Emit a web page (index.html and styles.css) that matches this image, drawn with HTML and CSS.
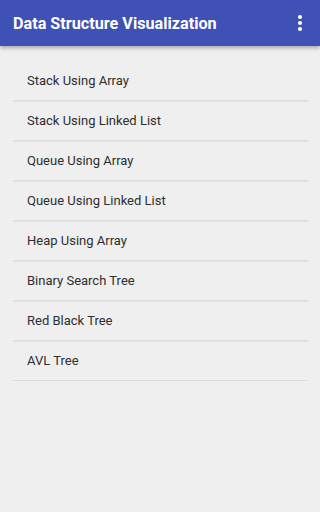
FILE: index.html
```html
<!DOCTYPE html>
<html>
<head>
<meta charset="utf-8">
<link rel="stylesheet" href="styles.css">
</head>
<body>
<header class="appbar">
  <div class="title">Data Structure Visualization</div>
  <svg class="menu" width="6" height="18" viewBox="0 0 6 18"><circle cx="3" cy="3" r="2.1" fill="#fff"/><circle cx="3" cy="9" r="2.1" fill="#fff"/><circle cx="3" cy="15" r="2.1" fill="#fff"/></svg>
</header>
<ul class="list">
  <li class="item">Stack Using Array</li>
  <li class="item">Stack Using Linked List</li>
  <li class="item">Queue Using Array</li>
  <li class="item">Queue Using Linked List</li>
  <li class="item">Heap Using Array</li>
  <li class="item">Binary Search Tree</li>
  <li class="item">Red Black Tree</li>
  <li class="item">AVL Tree</li>
</ul>
</body>
</html>
```
FILE: styles.css
```css
html, body {
  margin: 0;
  padding: 0;
  background: #efefef;
  font-family: Roboto, "Noto Sans", sans-serif;
}
.appbar {
  height: 46px;
  background: #3f51b5;
  display: flex;
  align-items: center;
  justify-content: space-between;
  padding: 0 17px 0 13px;
  box-shadow: 0 2px 4px rgba(0,0,0,0.3);
  position: relative;
}
.title {
  color: #fff;
  font-size: 16.2px;
  font-weight: 700;
  letter-spacing: 0;
}
.menu {
  display: block;
}
.list {
  list-style: none;
  margin: 15px 12px 0 13px;
  padding: 0;
}
.item {
  height: 39px;
  border-bottom: 1px solid #dcdcdc;
  box-shadow: 0 1px 1px rgba(0,0,0,0.04);
  display: flex;
  align-items: center;
  padding-left: 14px;
  font-size: 13px;
  color: #2e2e2e;
}
```
